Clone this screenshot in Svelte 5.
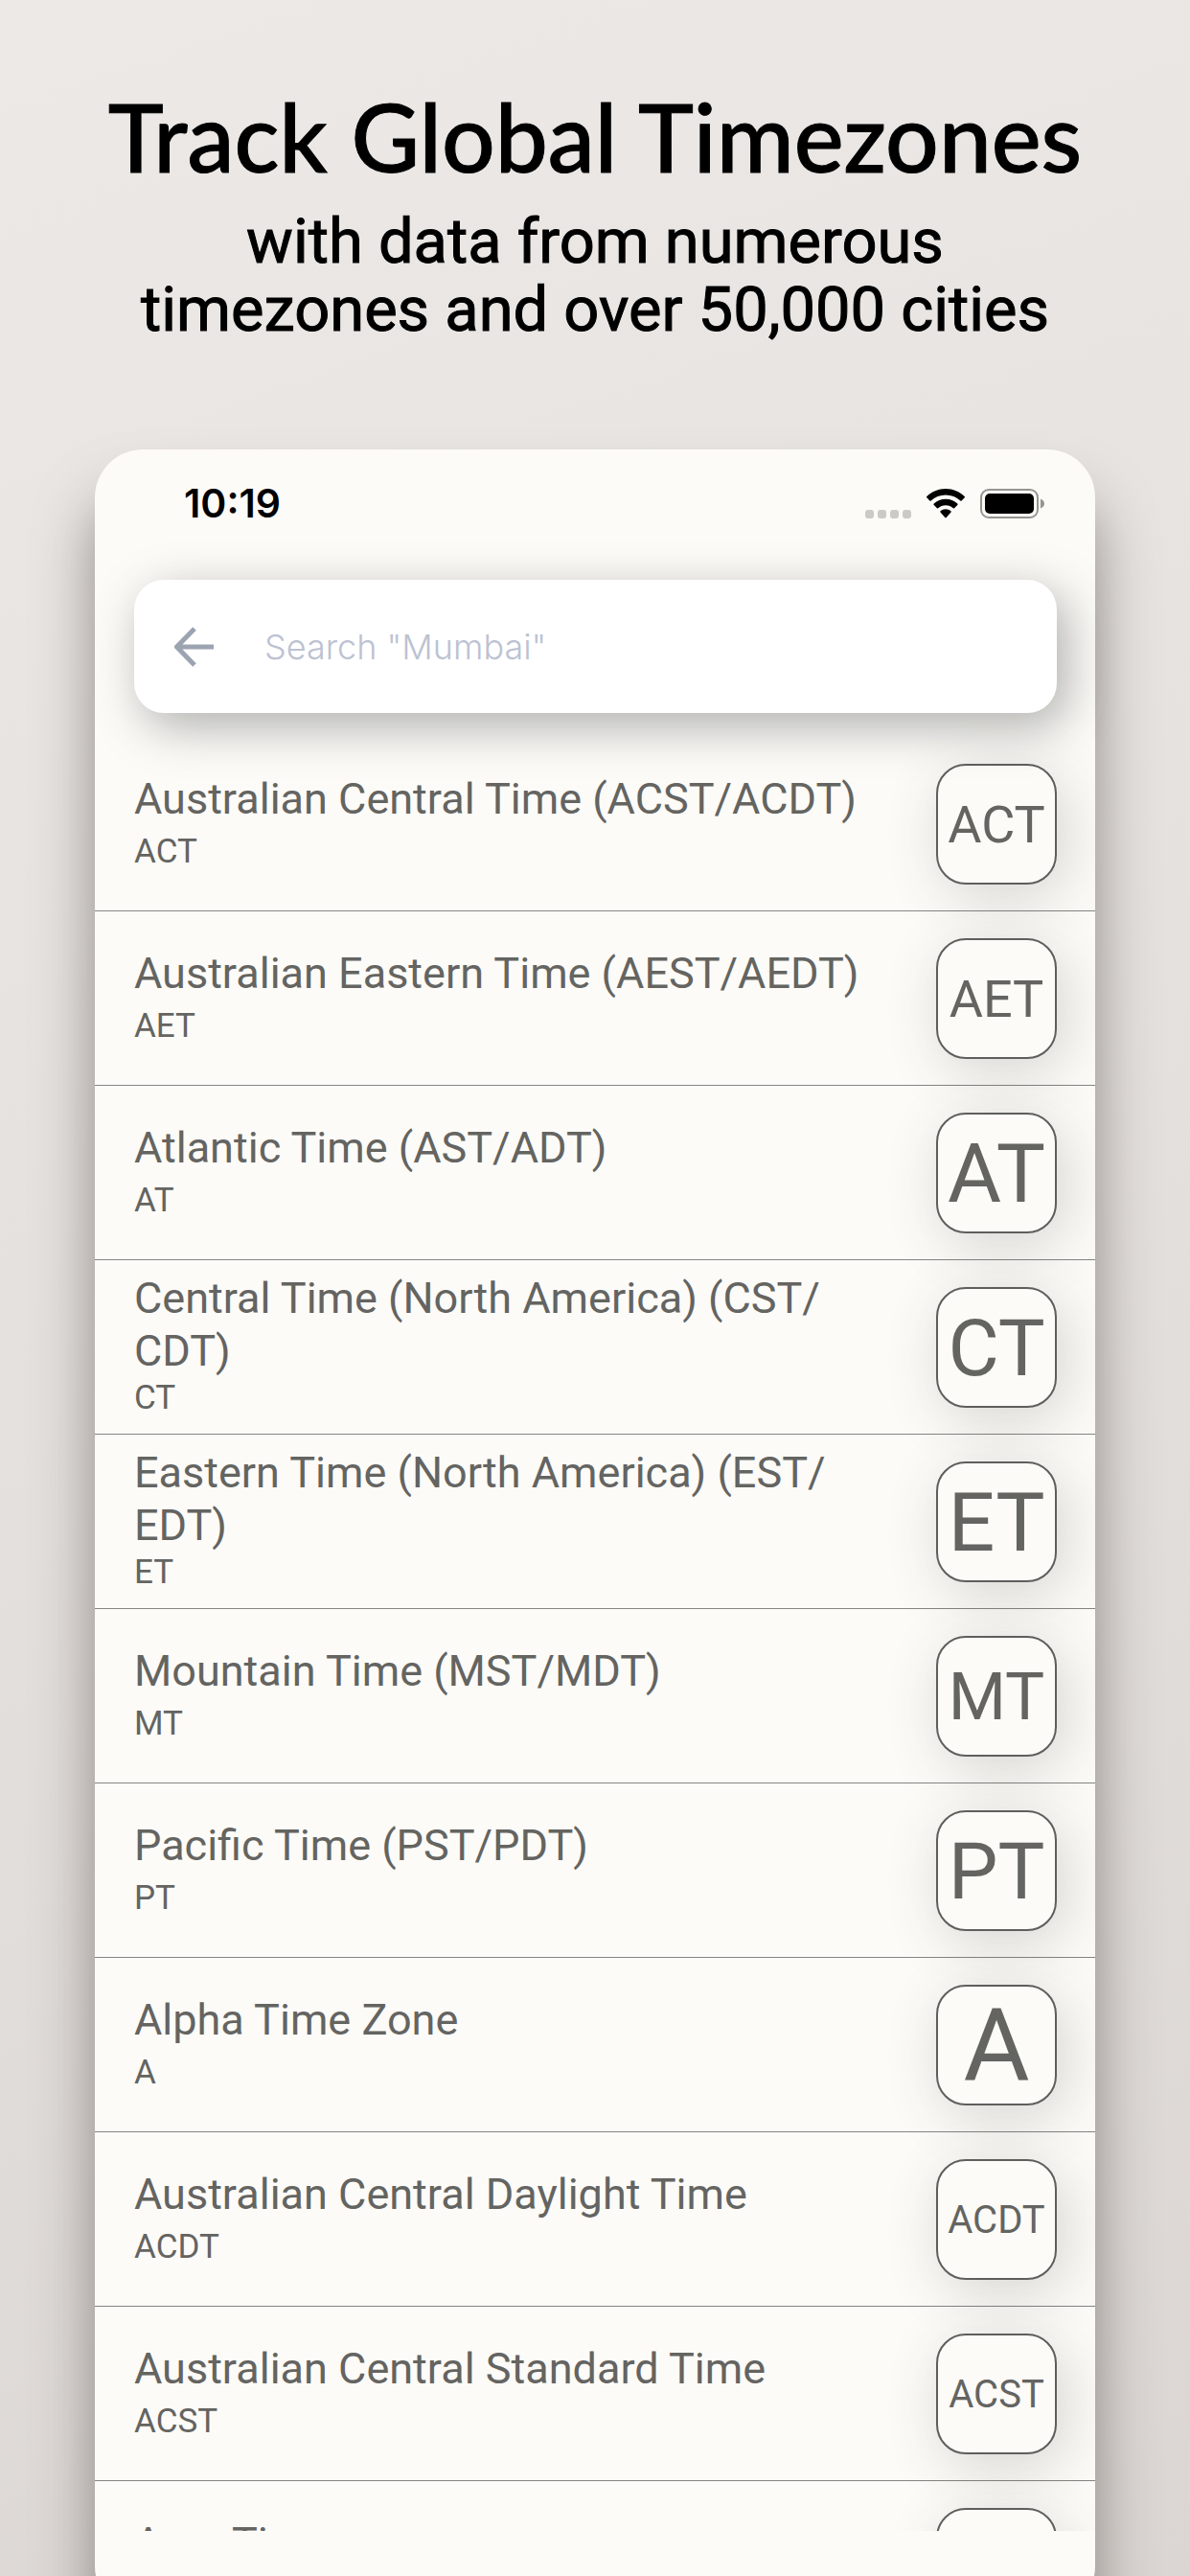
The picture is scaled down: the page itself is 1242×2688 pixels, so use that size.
<script lang="ts">
  interface Zone {
    name: string
    code: string
    size: number
  }

  const zones: Zone[] = [
    { name: 'Australian Central Time (ACST/ACDT)', code: 'ACT', size: 54 },
    { name: 'Australian Eastern Time (AEST/AEDT)', code: 'AET', size: 54 },
    { name: 'Atlantic Time (AST/ADT)', code: 'AT', size: 86 },
    { name: 'Central Time (North America) (CST/CDT)', code: 'CT', size: 82 },
    { name: 'Eastern Time (North America) (EST/EDT)', code: 'ET', size: 86 },
    { name: 'Mountain Time (MST/MDT)', code: 'MT', size: 69 },
    { name: 'Pacific Time (PST/PDT)', code: 'PT', size: 82 },
    { name: 'Alpha Time Zone', code: 'A', size: 106 },
    { name: 'Australian Central Daylight Time', code: 'ACDT', size: 40 },
    { name: 'Australian Central Standard Time', code: 'ACST', size: 40 },
    { name: 'Acre Time', code: 'ACT', size: 54 },
  ]

  let query = $state('')
  const shown = $derived(
    zones.filter((z) => (z.name + ' ' + z.code).toLowerCase().includes(query.trim().toLowerCase()))
  )

  // long names may wrap after the slash
  const breakable = (name: string) => name.replace('/', '/\u200b')
</script>

<main class="stage">
  <header class="intro">
    <h1>Track Global Timezones</h1>
    <p>with data from numerous<br />timezones and over 50,000 cities</p>
  </header>

  <section class="phone">
    <div class="status">
      <span class="time">10:19</span>
      <div class="indicators">
        <span class="dots"><i></i><i></i><i></i><i></i></span>
        <svg class="wifi" viewBox="0 0 40 31" width="40" height="31" aria-hidden="true">
          <path d="M20 0C27.700 0 34.700 3 39.700 8Q40.300 8.700 39.700 9.300L36.600 12.500Q36 13 35.400 12.500C31.300 8.600 25.900 6.500 20 6.500S8.700 8.600 4.600 12.500Q4 13 3.400 12.500L.3 9.300Q-.3 8.700.3 8C5.300 3 12.300 0 20 0Z" />
          <path d="M20 10.800C24.700 10.800 29 12.600 32.300 15.600Q33 16.300 32.300 17L29 20.200Q28.400 20.700 27.800 20.200C25.700 18.300 23 17.300 20 17.300S14.300 18.300 12.200 20.200Q11.600 20.700 11 20.200L7.700 17Q7 16.300 7.700 15.600C11 12.600 15.300 10.800 20 10.800Z" />
          <path d="M20 21.200C22 21.200 24 22 25.500 23.200Q26.100 23.900 25.500 24.500L20.700 30Q20 30.600 19.300 30L14.500 24.500Q13.900 23.900 14.500 23.200C16 22 18 21.200 20 21.200Z" />
        </svg>
        <svg class="battery" viewBox="0 0 68 31" width="68" height="31" aria-hidden="true">
          <rect x="1" y="1" width="59" height="29" rx="8" fill="none" stroke="#969592" stroke-width="2" />
          <rect x="5" y="5" width="51" height="21" rx="5" />
          <path d="M63 10.500C65.500 11.500 67 13.400 67 15.500S65.500 19.500 63 20.500Z" fill="#969592" />
        </svg>
      </div>
    </div>

    <form class="search" onsubmit={(e) => e.preventDefault()}>
      <button type="button" aria-label="Back" onclick={() => (query = '')}>
        <svg viewBox="0 0 42 42" width="42" height="42" aria-hidden="true">
          <path d="M41 21H4M21 2L2.500 21L21 40" fill="none" stroke="#9ca3b1" stroke-width="5" />
        </svg>
      </button>
      <input type="text" aria-label="Search cities" placeholder={'Search "Mumbai"'} bind:value={query} />
    </form>

    <ul class="zones">
      {#each shown as zone (zone.name)}
        <li>
          <div class="label">
            <span class="name">{breakable(zone.name)}</span>
            <span class="code">{zone.code}</span>
          </div>
          <div class="badge" style="font-size: {zone.size}px">{zone.code}</div>
        </li>
      {/each}
    </ul>
  </section>
</main>

<style>
  :global(body) { margin: 0; }

  .stage {
    box-sizing: border-box;
    height: 100vh;
    overflow: hidden;
    display: flex;
    flex-direction: column;
    padding: 0 99px;
    background: linear-gradient(160deg, #ece9e6, #e4e0dd 50%, #dbd6d3);
    font-family: Roboto, "Liberation Sans", sans-serif;
    color: #000;
  }

  .intro { padding: 80px 0 110px; margin: 0 -60px; text-align: center; -webkit-text-stroke: 1px #000; }
  h1 { margin: 0; font: 500 98px/124px Lato, sans-serif; white-space: nowrap; }
  .intro p { margin: 13px 0 0; font-size: 65px; line-height: 71px; }

  .phone {
    flex: 1;
    min-height: 0;
    display: flex;
    flex-direction: column;
    box-sizing: border-box;
    margin-bottom: -40px;
    padding-bottom: 87px;
    border-radius: 50px;
    background: #fcfbf8;
    box-shadow: 0 50px 60px rgba(60, 50, 48, 0.5);
  }

  .status { display: flex; align-items: center; justify-content: space-between; height: 112px; padding: 0 52px 0 93px; }
  .time { font: 600 41px/48px Inter, sans-serif; }
  .indicators { display: flex; align-items: center; gap: 16px; }
  .dots { display: flex; gap: 4px; align-self: flex-end; }
  .dots i { width: 9px; height: 9px; border-radius: 3px; background: #cbcac7; }

  .search {
    position: relative;
    display: flex;
    align-items: center;
    gap: 52px;
    height: 139px;
    flex: none;
    box-sizing: border-box;
    margin: 24px 40px 0 41px;
    padding: 0 42px;
    border-radius: 31px;
    background: #fff;
    box-shadow: 10px 14px 50px rgba(60, 60, 60, 0.4);
  }
  .search button { display: flex; padding: 0; border: 0; background: none; }
  .search input {
    flex: 1;
    min-width: 0;
    border: 0;
    padding: 0;
    outline: none;
    background: none;
    font: 300 36px/48px Inter, sans-serif;
    color: #555;
  }
  .search input::placeholder { color: #bcc2d2; opacity: 1; }

  .zones { flex: 1; min-height: 0; overflow: hidden; margin: 0; padding: 25px 0 0; list-style: none; }
  li {
    display: flex;
    align-items: center;
    justify-content: space-between;
    box-sizing: border-box;
    height: 182px;
    padding: 0 40px 0 41px;
    border-bottom: 1px solid #858583;
    color: #646461;
  }
  .label {
    display: flex;
    flex-direction: column;
    justify-content: space-between;
    gap: 1px;
    width: 780px;
    min-height: 104px;
    padding-bottom: 4px;
  }
  .name { font-size: 45px; line-height: 55px; }
  .code { font-size: 35px; line-height: 42px; }
  .badge {
    display: flex;
    flex: none;
    align-items: center;
    justify-content: center;
    box-sizing: border-box;
    width: 126px;
    height: 126px;
    padding-top: 2px;
    border: 2px solid #5e5e5c;
    border-radius: 31px;
    background: #fcfbf8;
    box-shadow: 8px 12px 60px rgba(60, 60, 60, 0.2);
  }
</style>
